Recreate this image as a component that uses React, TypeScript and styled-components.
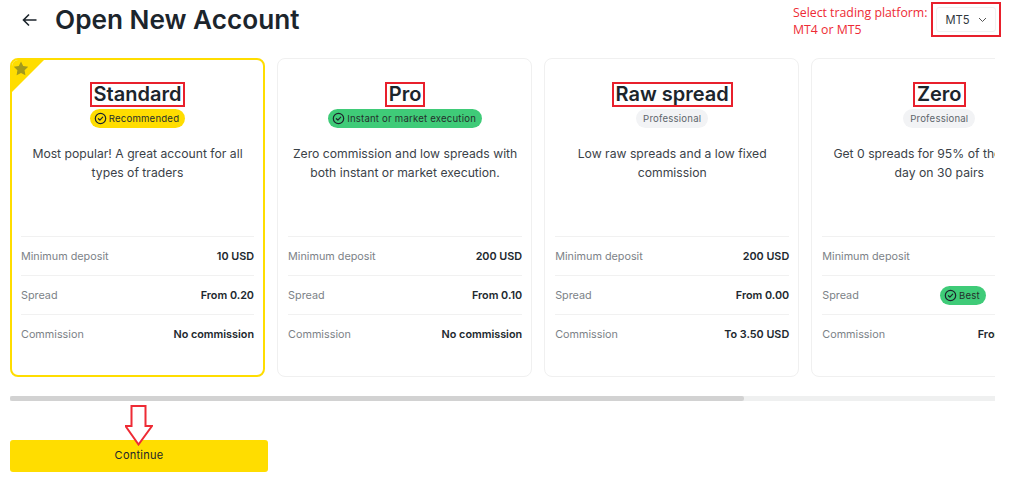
import React from "react";
import styled, { createGlobalStyle } from "styled-components";

const Global = createGlobalStyle`
  html, body { margin: 0; padding: 0; background: #fff; }
  body { font-family: Inter, "Liberation Sans", sans-serif; color: #1c252c; overflow: hidden; }
  * { box-sizing: border-box; }
`;

const Page = styled.div`
  position: relative;
  width: 1024px;
  height: 480px;
  padding: 0 29px 0 10px;
  overflow: hidden;
`;

const Header = styled.header`
  display: flex;
  align-items: center;
  height: 58px;
  padding: 0 0 19px 12px;
`;

const Back = styled.span`
  display: flex;
  width: 16px;
  height: 16px;
  margin-right: 17px;
  color: #1c252c;
`;

const PageTitle = styled.h1`
  margin: 0;
  font-size: 26.2px;
  line-height: 40px;
  font-weight: 600;
  color: #1c252c;
`;

const PlatformNote = styled.div`
  position: absolute;
  left: 793px;
  top: 4px;
  color: #ee2b35;
  font: 400 12.3px/17px "Open Sans", "Liberation Sans", sans-serif;
`;

const SelectFrame = styled.div`
  position: absolute;
  left: 931px;
  top: 2px;
  width: 70px;
  height: 35px;
  padding: 3px;
  border: 2px solid #e8202c;
`;

const Select = styled.div`
  display: flex;
  align-items: center;
  justify-content: center;
  gap: 8px;
  height: 25px;
  border: 1px solid #f1f1f1;
  border-radius: 3px;
  font-size: 11.2px;
  color: #30383e;
`;

const Cards = styled.div`
  display: flex;
  gap: 12.1px;
  width: 985px;
  height: 320px;
  overflow: hidden;
`;

const Card = styled.section<{ $active?: boolean }>`
  position: relative;
  flex: 0 0 255px;
  height: 319px;
  padding: ${(p) => (p.$active ? "22px 9px 0" : "23px 9px 0 10px")};
  background: #fff;
  border: ${(p) => (p.$active ? "2px solid #ffdd00" : "1px solid #f0f0f0")};
  border-radius: 8px;
  overflow: hidden;
  display: flex;
  flex-direction: column;
  align-items: center;
`;

const Corner = styled.svg`
  position: absolute;
  left: -2px;
  top: -2px;
`;

const CardTitle = styled.h2`
  margin: 0;
  height: 25px;
  padding: 0 2px;
  border: 2px solid #e8202c;
  font-size: 20px;
  line-height: 21px;
  font-weight: 600;
  white-space: nowrap;
  color: #1c252c;
`;

const Badge = styled.span<{ $tone: "yellow" | "green" | "grey" }>`
  display: inline-flex;
  align-items: center;
  gap: 2px;
  height: 19px;
  padding: 0 ${(p) => (p.$tone === "grey" ? "7px" : "6px")} 0 ${(p) => (p.$tone === "grey" ? "7px" : "4px")};
  border-radius: 10px;
  font-size: 9.6px;
  font-weight: 400;
  letter-spacing: 0.2px;
  white-space: nowrap;
  color: ${(p) => (p.$tone === "grey" ? "#5e666c" : "#25302c")};
  background: ${(p) =>
    p.$tone === "yellow" ? "#ffdd00" : p.$tone === "green" ? "#3fcb78" : "#f2f3f5"};
`;

const TitleBadge = styled.div`
  margin-top: 2px;
  display: flex;
`;

const Description = styled.p`
  margin: 16px -8px 0;
  width: 235px;
  height: 83px;
  font-size: 12.2px;
  line-height: 19px;
  text-align: center;
  white-space: nowrap;
  color: #3b4248;
`;

const Rows = styled.div`
  width: 100%;
  margin-top: 9px;
`;

const Row = styled.div`
  display: flex;
  align-items: center;
  justify-content: space-between;
  height: 39px;
  border-top: 1px solid #f1f1f1;
`;

const Label = styled.span`
  font-size: 10.8px;
  color: #7c8287;
`;

const Value = styled.span`
  display: flex;
  align-items: center;
  gap: 17px;
  font-size: 10.8px;
  font-weight: 600;
  white-space: nowrap;
  color: #21282e;
`;

const ScrollTrack = styled.div`
  width: 985px;
  height: 5px;
  margin-top: 18px;
  background: #eff0f0;
`;

const ScrollThumb = styled.div`
  height: 100%;
  border-radius: 2px;
  background: #d2d2d2;
`;

const Continue = styled.button`
  display: block;
  width: 258px;
  height: 32px;
  margin-top: 39px;
  padding: 0 0 2px;
  border: 0;
  border-radius: 3px;
  background: #ffdd00;
  font: 400 11px Inter, "Liberation Sans", sans-serif;
  letter-spacing: 0.25px;
  color: #1c252c;
`;

const DownArrow = styled.svg`
  position: absolute;
  left: 125px;
  top: 404px;
`;

const Check = () => (
  <svg width="13" height="13" viewBox="0 0 13 13" fill="none" stroke="#1c252c" strokeWidth="1.2">
    <circle cx="6.5" cy="6.5" r="5.2" />
    <path d="M4.4 6.7l1.5 1.4 2.8-2.9" strokeLinecap="round" strokeLinejoin="round" />
  </svg>
);

type Plan = {
  name: string;
  badge: string;
  tone: "yellow" | "green" | "grey";
  text: string[];
  deposit: string;
  spread: string;
  best?: boolean;
  commission: string;
  active?: boolean;
};

const plans: Plan[] = [
  {
    name: "Standard",
    badge: "Recommended",
    tone: "yellow",
    text: ["Most popular! A great account for all", "types of traders"],
    deposit: "10 USD",
    spread: "From 0.20",
    commission: "No commission",
    active: true,
  },
  {
    name: "Pro",
    badge: "Instant or market execution",
    tone: "green",
    text: ["Zero commission and low spreads with", "both instant or market execution."],
    deposit: "200 USD",
    spread: "From 0.10",
    commission: "No commission",
  },
  {
    name: "Raw spread",
    badge: "Professional",
    tone: "grey",
    text: ["Low raw spreads and a low fixed", "commission"],
    deposit: "200 USD",
    spread: "From 0.00",
    commission: "To 3.50 USD",
  },
  {
    name: "Zero",
    badge: "Professional",
    tone: "grey",
    text: ["Get 0 spreads for 95% of the trading", "day on 30 pairs"],
    deposit: "200 USD",
    spread: "From 0.00",
    best: true,
    commission: "From 0.05 USD",
  },
];

export default function App() {
  return (
    <Page>
      <Global />
      <Header>
        <Back>
          <svg width="16" height="16" viewBox="0 0 16 16" fill="none" stroke="currentColor" strokeWidth="1.6">
            <path d="M14.5 8H1.5M7 2.5L1.5 8 7 13.5" />
          </svg>
        </Back>
        <PageTitle>Open New Account</PageTitle>
      </Header>
      <PlatformNote>
        Select trading platform:
        <br />
        MT4 or MT5
      </PlatformNote>
      <SelectFrame>
        <Select>
          MT5
          <svg width="9" height="6" viewBox="0 0 9 6" fill="none" stroke="#555" strokeWidth="1">
            <path d="M1 1l3.5 3.5L8 1" />
          </svg>
        </Select>
      </SelectFrame>
      <Cards>
        {plans.map((p) => (
          <Card key={p.name} $active={p.active}>
            {p.active && (
              <Corner width="36" height="36" viewBox="0 0 36 36">
                <path d="M0 0H36L0 36Z" fill="#ffdd00" />
                <path
                  d="M11 3.5l2.2 4.5 5 .7-3.6 3.5.8 5-4.4-2.3-4.4 2.3.8-5-3.6-3.5 5-.7Z"
                  fill="#a39a1c"
                />
              </Corner>
            )}
            <CardTitle>{p.name}</CardTitle>
            <TitleBadge>
              <Badge $tone={p.tone}>
                {p.tone !== "grey" && <Check />}
                {p.badge}
              </Badge>
            </TitleBadge>
            <Description>
              {p.text[0]}
              <br />
              {p.text[1]}
            </Description>
            <Rows>
              <Row>
                <Label>Minimum deposit</Label>
                <Value>{p.deposit}</Value>
              </Row>
              <Row>
                <Label>Spread</Label>
                <Value>
                  {p.best && (
                    <Badge $tone="green">
                      <Check />
                      Best
                    </Badge>
                  )}
                  {p.spread}
                </Value>
              </Row>
              <Row>
                <Label>Commission</Label>
                <Value>{p.commission}</Value>
              </Row>
            </Rows>
          </Card>
        ))}
      </Cards>
      <ScrollTrack>
        <ScrollThumb style={{ width: `${(734 / 985) * 100}%` }} />
      </ScrollTrack>
      <Continue>Continue</Continue>
      <DownArrow width="28" height="42" viewBox="0 0 28 42" fill="#fff" stroke="#ee2b35" strokeWidth="2">
        <path d="M6.5 2H20.5V22H27L13.5 40.5 0.5 22H6.5Z" />
      </DownArrow>
    </Page>
  );
}
